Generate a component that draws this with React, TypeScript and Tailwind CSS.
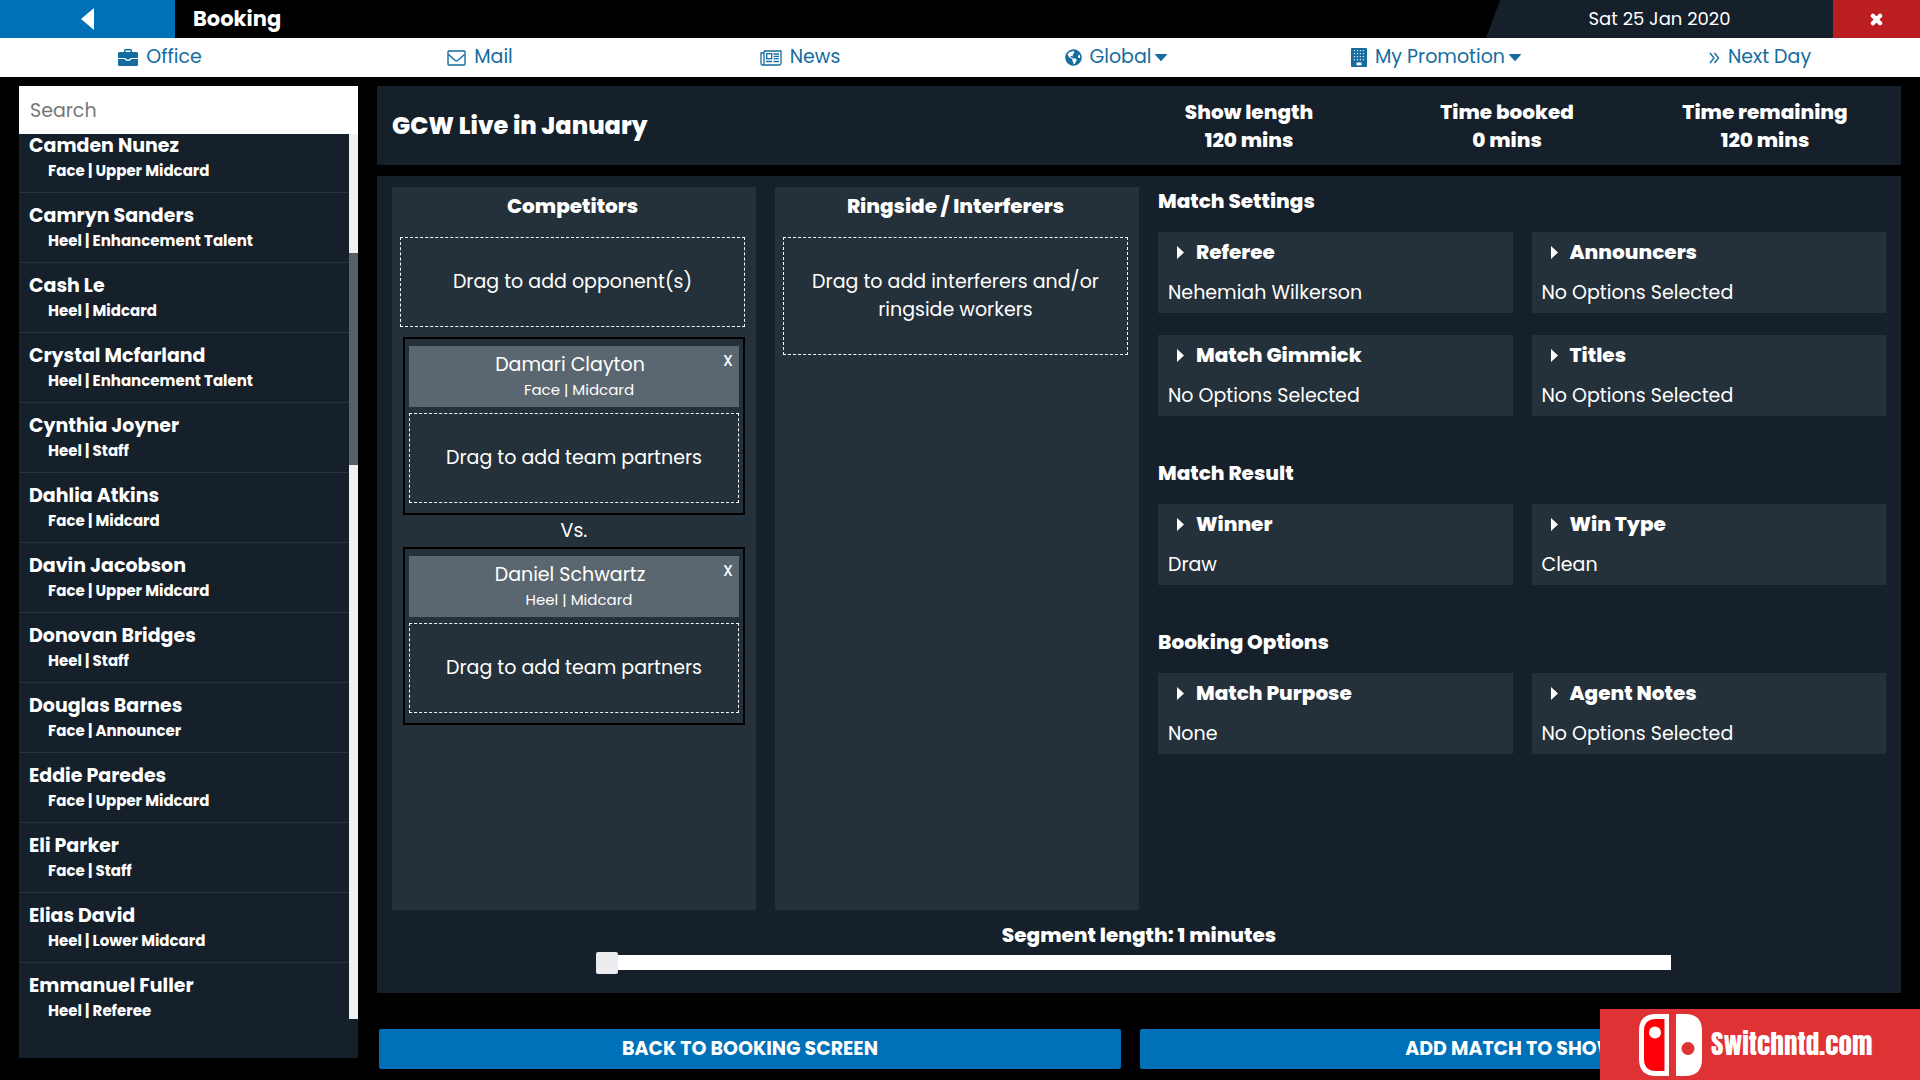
import { useState } from "react";
import { FaGlobeAmericas, FaTimes } from "react-icons/fa";

const workers = [
  ["Camden Nunez", "Face | Upper Midcard"],
  ["Camryn Sanders", "Heel | Enhancement Talent"],
  ["Cash Le", "Heel | Midcard"],
  ["Crystal Mcfarland", "Heel | Enhancement Talent"],
  ["Cynthia Joyner", "Heel | Staff"],
  ["Dahlia Atkins", "Face | Midcard"],
  ["Davin Jacobson", "Face | Upper Midcard"],
  ["Donovan Bridges", "Heel | Staff"],
  ["Douglas Barnes", "Face | Announcer"],
  ["Eddie Paredes", "Face | Upper Midcard"],
  ["Eli Parker", "Face | Staff"],
  ["Elias David", "Heel | Lower Midcard"],
  ["Emmanuel Fuller", "Heel | Referee"],
];

const sections = [
  {
    title: "Match Settings",
    options: [
      ["Referee", "Nehemiah Wilkerson"],
      ["Announcers", "No Options Selected"],
      ["Match Gimmick", "No Options Selected"],
      ["Titles", "No Options Selected"],
    ],
  },
  {
    title: "Match Result",
    options: [
      ["Winner", "Draw"],
      ["Win Type", "Clean"],
    ],
  },
  {
    title: "Booking Options",
    options: [
      ["Match Purpose", "None"],
      ["Agent Notes", "No Options Selected"],
    ],
  },
];

const totals = [
  ["Show length", "120 mins"],
  ["Time booked", "0 mins"],
  ["Time remaining", "120 mins"],
];

function BriefcaseIcon() {
  return (
    <svg width="20" height="17" viewBox="0 0 20 17" fill="currentColor" aria-hidden="true">
      <path d="M6 3V1.500Q6 0 7.500 0h5Q14 0 14 1.500V3h4.500Q20 3 20 4.500V9h-7.500q0 1.500-2.500 1.500T7.500 9H0V4.500Q0 3 1.500 3zm1.500 0h5V1.500h-5z" />
      <path d="M0 10h6.500q.5 2 3.500 2t3.500-2H20v5.500q0 1.500-1.500 1.500h-17Q0 17 0 15.500z" />
    </svg>
  );
}

function MailIcon() {
  return (
    <svg width="19" height="16" viewBox="0 0 19 16" fill="none" stroke="currentColor" strokeWidth="1.4" aria-hidden="true">
      <rect x="1" y="1" width="17" height="14" rx="1" />
      <path d="M1.500 4.500 8 10.200q1.500 1.200 3 0L17.500 4.500" />
    </svg>
  );
}

function NewsIcon() {
  return (
    <svg width="22" height="16" viewBox="0 0 22 16" fill="none" stroke="currentColor" strokeWidth="1.3" aria-hidden="true">
      <path d="M4 1h17v12.500q0 1.500-1.500 1.500h-17Q1 15 1 13.500V3h3v10.500Q4 15 2.500 15M4 3V1" />
      <rect x="6.700" y="3.700" width="5" height="5" />
      <path d="M13.500 4h5.500M13.500 6.300h5.500M13.500 8.700h5.500M6 11.500h6M13.500 11.500h5.500" />
    </svg>
  );
}

function BuildingIcon() {
  return (
    <svg width="16" height="19" viewBox="0 0 16 19" aria-hidden="true">
      <rect width="16" height="19" rx="1" fill="currentColor" />
      <g fill="#fff">
        {[2, 5, 8, 11].map((y) =>
          [2, 5, 8, 11].map((x) => <rect key={`${x}-${y}`} x={x + 0.8} y={y} width="1.300" height="1.300" opacity="0.8" />),
        )}
        <rect x="5.500" y="14.500" width="5" height="2.800" />
      </g>
    </svg>
  );
}

function ChevronsIcon() {
  return (
    <svg width="11" height="12" viewBox="0 0 11 12" fill="none" stroke="currentColor" strokeWidth="1.400" aria-hidden="true">
      <path d="M1 1l4 5-4 5M5.500 1l4 5-4 5" />
    </svg>
  );
}

function CaretIcon() {
  return (
    <svg width="12" height="7" viewBox="0 0 12 7" fill="currentColor" className="mr-2 ml-1" aria-hidden="true">
      <path d="M.500 0h11q.8.200.2 1L6.500 6.700q-.500.400-1 0L.300 1Q-.300.200.500 0z" />
    </svg>
  );
}

const navItems = [
  { label: "Office", icon: <BriefcaseIcon />, menu: false },
  { label: "Mail", icon: <MailIcon />, menu: false },
  { label: "News", icon: <NewsIcon />, menu: false },
  { label: "Global", icon: <FaGlobeAmericas size={17} />, menu: true },
  { label: "My Promotion", icon: <BuildingIcon />, menu: true },
  { label: "Next Day", icon: <ChevronsIcon />, menu: false },
];

function DropZone({ children, tall }: { children: string; tall?: boolean }) {
  return (
    <div
      className={`flex items-center justify-center border border-dashed border-white px-4 text-center text-[19px] leading-7 ${
        tall ? "h-[118px]" : "h-[90px]"
      }`}
    >
      {children}
    </div>
  );
}

function Team({ name, role }: { name: string; role: string }) {
  return (
    <div className="ml-[3px] border-2 border-black px-1 pt-[7px] pb-[10px]">
      <div className="relative h-[61px] bg-[#5b6770] pt-[5px] text-center">
        <div className="pr-2 text-[19px] leading-7">{name}</div>
        <div className="pl-[10px] text-[15px] leading-[22px]">{role}</div>
        <button type="button" aria-label={`Remove ${name}`} className="absolute top-[3px] right-[3px] w-4 text-[15px] leading-6 font-medium">
          X
        </button>
      </div>
      <div className="pt-[6px]">
        <DropZone>Drag to add team partners</DropZone>
      </div>
    </div>
  );
}

function SwitchLogo() {
  return (
    <svg width="63" height="62" viewBox="0 0 63 62" className="shrink-0" aria-hidden="true">
      <path d="M30 0H17Q0 0 0 17v28q0 17 17 17h13z" fill="#fff" />
      <path d="M25.500 5H17Q5 5 5 17v28q0 12 12 12h8.500z" fill="#ff0008" />
      <circle cx="16" cy="18.500" r="6" fill="#fff" />
      <path d="M37 0h9q17 0 17 17v28q0 17-17 17h-9z" fill="#fff" />
      <circle cx="49" cy="34.500" r="6.500" fill="#df3234" />
    </svg>
  );
}

export default function App() {
  const [minutes, setMinutes] = useState(1);
  return (
    <div className="flex h-screen flex-col overflow-hidden bg-black font-['Poppins','Inter',sans-serif] text-white">
      <header className="flex h-[38px] shrink-0 items-stretch">
        <button type="button" aria-label="Back" className="flex w-[175px] items-center justify-center bg-[#0070b8]">
          <svg width="13" height="22" viewBox="0 0 13 22" fill="currentColor" aria-hidden="true">
            <path d="M13 0v22L0 11z" />
          </svg>
        </button>
        <h1 className="flex-1 pl-[18px] text-[21px] leading-[38px] font-bold">Booking</h1>
        <div className="flex w-[347px] items-center justify-center bg-[#15202a] pb-px text-[18px] [clip-path:polygon(14px_0,100%_0,100%_100%,0_100%)]">
          Sat 25 Jan 2020
        </div>
        <button type="button" aria-label="Close" className="flex w-[87px] items-center justify-center bg-[#bb1e21]">
          <FaTimes size={15} stroke="currentColor" strokeWidth={50} />
        </button>
      </header>

      <nav className="grid h-[39px] shrink-0 grid-cols-6 bg-white text-[19px] text-[#146c9f]">
        {navItems.map((item) => (
          <a key={item.label} href="#" className="flex items-center justify-center">
            <span className="mr-2">{item.icon}</span>
            {item.label}
            {item.menu && <CaretIcon />}
          </a>
        ))}
      </nav>

      <div className="flex min-h-0 flex-1 pt-[9px] pr-[19px] pl-[19px]">
        <aside className="mb-[22px] flex w-[339px] shrink-0 flex-col bg-[#15202a]">
          <input
            type="text"
            placeholder="Search"
            aria-label="Search"
            className="h-12 w-full shrink-0 bg-white px-[11px] text-[19px] text-black placeholder:text-[#777]"
          />
          <div className="mb-[39px] flex min-h-0 flex-1">
            <ul className="flex min-w-0 flex-1 flex-col justify-end overflow-hidden">
              {workers.map(([name, role]) => (
                <li
                  key={name}
                  className="h-[70px] shrink-0 border-b border-[#28333c] pt-[10px] pl-[10px] font-bold last:-mb-[14px] last:border-b-0"
                >
                  <div className="text-[19px] leading-[26px]">{name}</div>
                  <div className="pl-[19px] text-[15px] leading-6">{role}</div>
                </li>
              ))}
            </ul>
            <div className="w-[9px] bg-[#f1f1f1] pt-[119px]">
              <div className="h-[212px] bg-[#55616a]" />
            </div>
          </div>
        </aside>

        <main className="ml-[19px] flex min-w-0 flex-1 flex-col">
          <section className="flex h-[79px] shrink-0 items-center bg-[#15202a] pr-[7px] pl-[15px]">
            <h2 className="flex-1 text-[24px] font-extrabold">GCW Live in January</h2>
            <dl className="grid w-[774px] grid-cols-3 text-center text-[20px] leading-7 font-extrabold">
              {totals.map(([label, value]) => (
                <div key={label}>
                  <dt>{label}</dt>
                  <dd>{value}</dd>
                </div>
              ))}
            </dl>
          </section>

          <section className="mt-[11px] flex min-h-0 flex-1 flex-col bg-[#15202a] px-[15px] pt-[11px]">
            <div className="grid min-h-0 flex-1 grid-cols-[1fr_1fr_2fr] gap-[19px]">
              <div className="bg-[#25313a] px-2 pr-[11px]">
                <h3 className="pt-px pb-[13px] text-center text-[20px] leading-9 font-extrabold">Competitors</h3>
                <DropZone>Drag to add opponent(s)</DropZone>
                <div className="pt-[10px]">
                  <Team name="Damari Clayton" role="Face | Midcard" />
                  <div className="pl-[3px] text-center text-[19px] leading-8">Vs.</div>
                  <Team name="Daniel Schwartz" role="Heel | Midcard" />
                </div>
              </div>
              <div className="bg-[#25313a] px-2 pr-[11px]">
                <h3 className="pt-px pb-[13px] text-center text-[20px] leading-9 font-extrabold">Ringside / Interferers</h3>
                <DropZone tall>Drag to add interferers and/or ringside workers</DropZone>
              </div>
              <div>
                {sections.map((section) => (
                  <div key={section.title} className="mb-[43px]">
                    <h3 className="pb-[17px] text-[20px] leading-7 font-extrabold">{section.title}</h3>
                    <div className="grid grid-cols-2 gap-x-[19px] gap-y-[22px]">
                      {section.options.map(([label, value]) => (
                        <div key={label} className="h-[81px] bg-[#25313a] px-[10px] pt-[6px] text-[19px]">
                          <button type="button" className="flex items-center pl-[9px] text-[20px] leading-7 font-extrabold">
                            <svg width="7" height="13" viewBox="0 0 7 13" fill="currentColor" className="mr-3" aria-hidden="true">
                              <path d="M0 0l7 6.500-7 6.500z" />
                            </svg>
                            {label}
                          </button>
                          <div className="pt-[13px] leading-7">{value}</div>
                        </div>
                      ))}
                    </div>
                  </div>
                ))}
              </div>
            </div>
            <div className="flex h-[83px] shrink-0 flex-col items-center pt-[11px]">
              <label htmlFor="segment-length" className="text-[20px] leading-7 font-extrabold">
                Segment length: {minutes} minutes
              </label>
              <input
                id="segment-length"
                type="range"
                min={1}
                max={120}
                value={minutes}
                onChange={(event) => setMinutes(Number(event.target.value))}
                className="mt-[6px] mr-[11px] h-[15px] w-[72%] appearance-none bg-white [&::-webkit-slider-thumb]:h-[22px] [&::-webkit-slider-thumb]:w-[22px] [&::-webkit-slider-thumb]:appearance-none [&::-webkit-slider-thumb]:rounded-[2px] [&::-webkit-slider-thumb]:bg-[#eaecef]"
              />
            </div>
          </section>

          <div className="mt-9 mb-[11px] flex shrink-0 gap-[19px] pr-[19px] pl-[2px]">
            <button type="button" className="h-10 flex-1 rounded-[2px] bg-[#0070b8] text-[19px] font-bold">
              BACK TO BOOKING SCREEN
            </button>
            <button type="button" className="h-10 flex-1 rounded-[2px] bg-[#0070b8] text-[19px] font-bold">
              ADD MATCH TO SHOW
            </button>
          </div>
        </main>
      </div>

      <div className="fixed right-0 bottom-0 flex h-[71px] w-80 items-center bg-[#df3234] pl-[39px]">
        <SwitchLogo />
        <span className="ml-[9px] font-['Impact','Anton','Oswald','Roboto_Condensed','Liberation_Sans',sans-serif] text-[27px]">
          Switchntd.com
        </span>
      </div>
    </div>
  );
}
